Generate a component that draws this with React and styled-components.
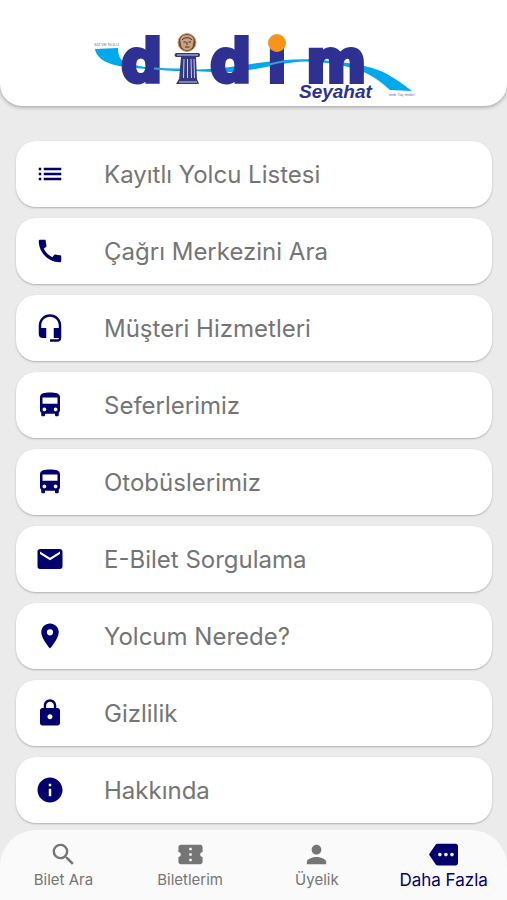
import React from 'react'
import styled, { createGlobalStyle } from 'styled-components'
import {
    MdList,
    MdCall,
    MdHeadsetMic,
    MdDirectionsBus,
    MdEmail,
    MdLocationOn,
    MdLock,
    MdInfo,
    MdSearch,
    MdConfirmationNumber,
    MdPerson,
    MdMore,
} from 'react-icons/md'

const GlobalStyle = createGlobalStyle`
    * {
        box-sizing: border-box;
    }

    body {
        margin: 0;
        background: #ebebeb;
        font-family: Inter, Roboto, sans-serif;
    }
`;

const Page = styled.div`
    min-height: 100vh;
    display: flex;
    flex-direction: column;
`;

const Header = styled.header`
    display: flex;
    justify-content: center;
    padding: 0 16px 2px;
    background: white;
    border-radius: 0 0 22px 22px;
    box-shadow: 0 1px 4px rgba(0, 0, 0, 0.35);
`;

const LogoImage = styled.svg`
    display: block;
    width: 330px;
    height: 104px;
`;

const Wordmark = styled.text`
    fill: #2e3192;
    stroke: #2e3192;
    stroke-width: 4px;
    font-family: "DejaVu Sans", sans-serif;
    font-size: 58px;
    font-weight: bold;
`;

const Tagline = styled.text`
    fill: #2e3192;
    font-family: "Liberation Sans", sans-serif;
    font-size: 19px;
    font-style: italic;
    font-weight: bold;
`;

const SmallPrint = styled.text`
    fill: #6d6fae;
    font-family: "Liberation Sans", sans-serif;
    font-size: 4px;
`;

const Menu = styled.ul`
    flex: 1;
    display: flex;
    flex-direction: column;
    gap: 11px;
    margin: 0;
    padding: 35px 15px 6px 16px;
    list-style: none;
`;

const MenuButton = styled.button`
    display: flex;
    align-items: center;
    gap: 39px;
    width: 100%;
    height: 66px;
    padding: 0 19px;
    border: 0;
    border-radius: 20px;
    background: white;
    box-shadow: 0 1px 2px rgba(0, 0, 0, 0.25);
    color: #757575;
    font: inherit;
    font-size: 24px;
    text-align: left;

    svg {
        flex: none;
        color: #02006c;
    }
`;

const TabBar = styled.nav`
    position: sticky;
    bottom: 0;
    display: flex;
    height: 70px;
    background: #fafafa;
    border-radius: 36px 36px 0 0;
`;

const Tab = styled.a`
    flex: 1;
    display: flex;
    flex-direction: column;
    align-items: center;
    gap: 1px;
    padding-top: 10px;
    color: ${props => (props.$active ? '#02006c' : '#757575')};
    font-size: ${props => (props.$active ? '17px' : '15px')};
    line-height: 20px;
    text-decoration: none;
    white-space: nowrap;
`;

const Logo = () => (
    <LogoImage viewBox="89 0 330 104" role="img" aria-label="Didim Seyahat">
        {/* ribbon behind the letters */}
        <path d="M95 49L118 48C118 57 121 62 130 64C146 68 160 69 176 69.500L196 69.500C220 69 240 66 258 63C285 59 310 58 330 61C352 63 370 66 383 72C395 78 404 85 412 91L390 90C382 83 376 78 366 73C350 66 330 62 305 61.500C285 62 265 68 242 71C225 73 208 72 196 71L176 71C155 70 135 68 119 66C104 63 96 57 95 49Z" fill="#00a8ec" />
        <Wordmark x="121" y="82">d</Wordmark>
        <Wordmark x="210" y="82">d</Wordmark>
        <Wordmark x="267" y="82">ı</Wordmark>
        <Wordmark x="306" y="82">m</Wordmark>
        <path d="M154 68.500C166 69.500 173 69.500 180 69.500M268 65C274 63 280 62 286 61" fill="none" stroke="#2aa5e0" strokeWidth="2" />
        <circle cx="277" cy="43" r="9" fill="#f7941d" />

        {/* column with the medallion on top */}
        <path d="M176 53H199Q201 55 199 57H176Q173 55 176 53Z" fill="#34387f" />
        <path d="M181 57H196L197 80H179Z" fill="#34387f" />
        <path d="M179 79H197L199 84H176Z" fill="#34387f" />
        <path d="M177 55H198M184 59L183.500 78M187.500 59V78M191 59L191.500 78M194 59L194.500 78M179 82H197" fill="none" stroke="#c9cde8" strokeWidth="1" />
        <circle cx="187" cy="42.500" r="9" fill="#6b4a34" stroke="#d8a068" strokeWidth="1" />
        <path d="M181 44C179 38 182 35 187 35C192 35 195 38 193 44C193 48 190 50 187 50C184 50 181 48 181 44Z" fill="#c9a183" />
        <path d="M182 40C184 37 190 37 192 40M183.500 42H186M188.500 42H191M187 42V45M185 47H189.500" fill="none" stroke="#4b3024" strokeWidth="1" />

        <SmallPrint x="94" y="46">SİZ VE NOLU</SmallPrint>
        <Tagline x="299" y="98">Seyahat</Tagline>
        <SmallPrint x="389" y="96">web Taş mobil</SmallPrint>
    </LogoImage>
)

const menuItems = [
    { icon: MdList, label: 'Kayıtlı Yolcu Listesi' },
    { icon: MdCall, label: 'Çağrı Merkezini Ara' },
    { icon: MdHeadsetMic, label: 'Müşteri Hizmetleri' },
    { icon: MdDirectionsBus, label: 'Seferlerimiz' },
    { icon: MdDirectionsBus, label: 'Otobüslerimiz' },
    { icon: MdEmail, label: 'E-Bilet Sorgulama' },
    { icon: MdLocationOn, label: 'Yolcum Nerede?' },
    { icon: MdLock, label: 'Gizlilik' },
    { icon: MdInfo, label: 'Hakkında' },
]

const tabs = [
    { icon: MdSearch, label: 'Bilet Ara' },
    { icon: MdConfirmationNumber, label: 'Biletlerim' },
    { icon: MdPerson, label: 'Üyelik' },
    { icon: MdMore, label: 'Daha Fazla', active: true },
]

const App = () => (
    <Page>
        <GlobalStyle />
        <Header>
            <Logo />
        </Header>
        <Menu>
            {menuItems.map(({ icon: Icon, label }) => (
                <li key={label}>
                    <MenuButton type="button">
                        <Icon size={30} />
                        {label}
                    </MenuButton>
                </li>
            ))}
        </Menu>
        <TabBar>
            {tabs.map(({ icon: Icon, label, active }) => (
                <Tab key={label} href="#" $active={active}>
                    <Icon size={29} />
                    {label}
                </Tab>
            ))}
        </TabBar>
    </Page>
)

export default App
